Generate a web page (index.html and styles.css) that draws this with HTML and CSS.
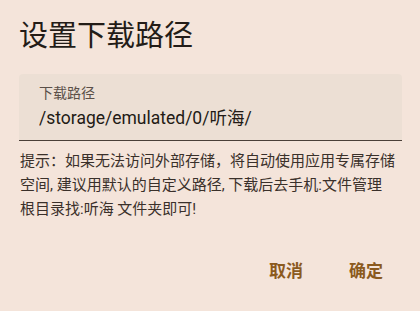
FILE: index.html
```html
<!DOCTYPE html>
<html lang="zh">
<head>
    <meta charset="UTF-8">
    <meta name="viewport" content="width=device-width, initial-scale=1.0">
    <title>设置下载路径</title>
    <link rel="stylesheet" href="styles.css">
</head>
<body>
    <div class="dialog">
        <h1 class="title">设置下载路径</h1>
        <div class="field">
            <label for="path">下载路径</label>
            <input type="text" id="path" value="/storage/emulated/0/听海/">
        </div>
        <p class="hint">提示：如果无法访问外部存储，将自动使用应用专属存储空间, 建议用默认的自定义路径, 下载后去手机:文件管理根目录找:听海 文件夹即可!</p>
        <div class="actions">
            <button class="btn">取消</button>
            <button class="btn">确定</button>
        </div>
    </div>
</body>
</html>
```

FILE: styles.css
```css
body {
    margin: 0;
    background: #f4e4da;
    font-family: Roboto, "Noto Sans CJK SC", sans-serif;
    color: #221a15;
}

.dialog {
    padding: 15px 18px 0 19px;
}

.title {
    margin: 0 0 17px 0;
    font-size: 29px;
    font-weight: 400;
    line-height: 42px;
    color: #231c17;
}

.field {
    display: flex;
    flex-direction: column;
    background: #ecdfd4;
    border-radius: 4px 4px 0 0;
    border-bottom: 1.5px solid #4a3f38;
    padding: 9px 20px 10px;
}

.field label {
    font-size: 14px;
    line-height: 20px;
    color: #5a4f48;
}

.field input {
    border: none;
    background: transparent;
    padding: 0;
    margin-top: 3px;
    font-family: Roboto, "Noto Sans CJK SC", sans-serif;
    font-size: 17.5px;
    line-height: 24px;
    color: #221a15;
    outline: none;
}

.hint {
    margin: 8px 6px 0 1px;
    font-size: 15px;
    line-height: 24px;
    color: #3a302a;
}

.actions {
    display: flex;
    justify-content: flex-end;
    gap: 14px;
    margin: 32px 3px 0 0;
}

.btn {
    border: none;
    background: transparent;
    font-family: Roboto, "Noto Sans CJK SC", sans-serif;
    font-size: 17px;
    font-weight: 700;
    color: #8b5a1e;
    padding: 4px 16px;
}
```
